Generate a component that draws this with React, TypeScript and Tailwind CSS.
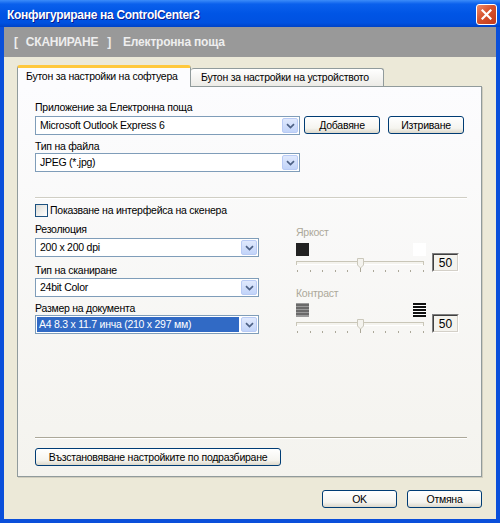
import React from "react";

const Chevron = () => (
  <svg width="9" height="6" viewBox="0 0 9 6">
    <path d="M1 1.2 L4.5 4.6 L8 1.2" stroke="#4D6185" strokeWidth="1.7" fill="none" />
  </svg>
);

type ComboProps = { value: string; width: string; selected?: boolean };

function Combo({ value, width, selected }: ComboProps) {
  return (
    <div className={`flex h-[19px] shrink-0 border border-[#7F9DB9] bg-white ${width}`}>
      <div className="flex min-w-0 flex-1 items-center p-[1px]">
        {selected ? (
          <span className="flex h-full flex-1 items-center whitespace-nowrap bg-[#316AC5] pl-[2px] text-white">{value}</span>
        ) : (
          <span className="whitespace-nowrap pl-[3px]">{value}</span>
        )}
      </div>
      <div className="m-[1px] flex w-[16px] items-center justify-center rounded-[2px] border border-[#B9CBF5] bg-[linear-gradient(#E0E9FD,#C2D4F9)]">
        <Chevron />
      </div>
    </div>
  );
}

function XpButton({ children, className = "" }: { children: React.ReactNode; className?: string }) {
  return (
    <button
      className={`flex h-[18px] shrink-0 items-center justify-center whitespace-nowrap rounded-[3px] border border-[#003C74] bg-[linear-gradient(#FFFFFF,#F5F4EF_70%,#DCD8CB)] text-[10.5px] leading-none tracking-[-0.25px] text-black ${className}`}
    >
      {children}
    </button>
  );
}

const Label = ({ children, disabled }: { children: React.ReactNode; disabled?: boolean }) => (
  <span className={`block h-[13px] whitespace-nowrap leading-[13px] ${disabled ? "text-[#ACA899]" : "text-black"}`}>{children}</span>
);

// disabled trackbar with 11 ticks
const Slider = ({ className = "" }: { className?: string }) => {
  const ticks = Array.from({ length: 11 }, (_, i) => Math.round(1 + i * 12.6) + 0.5);
  return (
    <svg width="130" height="16" viewBox="0 0 130 16" className={className}>
      <rect x="0.5" y="4.5" width="127" height="3" fill="#F4F3EE" stroke="#C9C6B8" />
      <line x1="1" y1="7.5" x2="127" y2="7.5" stroke="#FFFFFF" />
      {ticks.map((x, i) => (
        <line key={i} x1={x} y1={i === 5 ? 11 : 13} x2={x} y2="15" stroke="#ACA899" />
      ))}
      <path d="M61.5 1.5 H67.5 V8 L64.5 11 L61.5 8 Z" fill="#F4F3EE" stroke="#CBC8BB" />
    </svg>
  );
};

const ValueBox = () => (
  <div className="mb-[1px] flex h-[19px] w-[27px] items-center justify-center border border-t-[#808080] border-l-[#808080] border-r-[#FFFFFF] border-b-[#FFFFFF] bg-[#F4F3EE] text-[12px] tracking-normal">
    <div className="flex h-full w-full items-center justify-center border border-t-[#404040] border-l-[#404040] border-r-[#D4D0C8] border-b-[#D4D0C8]">50</div>
  </div>
);

const LightStripes = () => (
  <svg width="13" height="14" viewBox="0 0 13 14">
    <rect width="13" height="14" fill="#9A9A9A" />
    {[1, 4, 7, 10].map((y) => (
      <rect key={y} x="0" y={y} width="13" height="2" fill="#6A6A6A" />
    ))}
  </svg>
);

const DarkStripes = () => (
  <svg width="13" height="14" viewBox="0 0 13 14">
    <rect width="13" height="14" fill="#FFFFFF" />
    {[0, 3, 6, 9, 12].map((y) => (
      <rect key={y} x="0" y={y} width="13" height="2" fill="#111111" />
    ))}
  </svg>
);

export default function App() {
  return (
    <div className="flex h-[523px] w-[500px] flex-col overflow-hidden bg-[#0A4FDA] font-['Liberation_Sans',Arial,sans-serif] text-[10.5px] tracking-[-0.25px] text-black">
      {/* title bar */}
      <div className="flex h-[27px] shrink-0 items-center justify-between bg-[linear-gradient(#3C8CF9_0%,#0A60EC_15%,#0055E5_50%,#0051E0_85%,#0043C6_100%)] pl-[7px] pr-[3px] pt-[2px]">
        <span className="text-[12px] font-bold tracking-[-0.3px] text-white [text-shadow:1px_1px_0_#0A1A8C]">Конфигуриране на ControlCenter3</span>
        <div className="flex h-[21px] w-[21px] items-center justify-center rounded-[3px] border border-white bg-[linear-gradient(135deg,#EE8B6A,#D6522D_45%,#C23A1A)]">
          <svg width="11" height="11" viewBox="0 0 11 11">
            <path d="M1.5 1.5 L9.5 9.5 M9.5 1.5 L1.5 9.5" stroke="#FFFFFF" strokeWidth="2.2" strokeLinecap="square" />
          </svg>
        </div>
      </div>

      {/* client area */}
      <div className="mx-[4px] mb-[4px] flex flex-1 flex-col bg-[#ECE9D8]">
        <div className="flex h-[30px] shrink-0 items-center bg-[#999999] pl-[10px] text-[12px] font-bold tracking-[-0.2px] text-[#EEEEEE]">
          <span>[</span>
          <span className="ml-[8px]">СКАНИРАНЕ</span>
          <span className="ml-[9px]">]</span>
          <span className="ml-[12px]">Електронна поща</span>
        </div>

        <div className="flex flex-col pl-[13px] pt-[8px]">
          {/* tabs */}
          <div className="flex h-[21px] items-end">
            <div className="relative z-10 -mb-px flex h-[22px] w-[174px] items-center whitespace-nowrap rounded-t-[3px] border-x border-t-[3px] border-x-[#919B9C] border-t-[#FFC83C] bg-[#FCFCFE] pb-[2px] pl-[8px]">
              Бутон за настройки на софтуера
            </div>
            <div className="flex h-[18px] w-[193px] items-center whitespace-nowrap rounded-t-[3px] border-r border-t border-[#919B9C] bg-[linear-gradient(#FFFFFF,#ECEBE6)] pl-[10px]">
              Бутон за настройки на устройството
            </div>
          </div>

          {/* panel */}
          <div className="flex h-[391px] w-[465px] flex-col border border-[#919B9C] bg-[linear-gradient(#FCFCFE,#F4F3EE)] pb-[10px] pl-[17px] pr-[14px] pt-[14px] shadow-[1px_1px_0_#D0CDBE]">
            <Label>Приложение за Електронна поща</Label>
            <div className="mt-[2px] flex items-start">
              <Combo value="Microsoft Outlook Express 6" width="w-[265px]" />
              <XpButton className="ml-[4px] w-[76px]">Добавяне</XpButton>
              <XpButton className="ml-[8px] w-[76px]">Изтриване</XpButton>
            </div>
            <div className="mt-[5px]">
              <Label>Тип на файла</Label>
            </div>
            <Combo value="JPEG (*.jpg)" width="w-[265px]" />

            <div className="mt-[25px] h-[2px] border-t border-b border-t-[#D0CEC4] border-b-white" />

            <div className="mt-[5px] flex h-[13px] items-center gap-[2px]">
              <div className="h-[13px] w-[13px] border border-[#1C5180] bg-[linear-gradient(135deg,#DCDCD7,#FFFFFF)]" />
              <span className="whitespace-nowrap leading-[13px]">Показване на интерфейса на скенера</span>
            </div>

            <div className="mt-[6px] flex">
              <div className="flex w-[224px] flex-col">
                <Label>Резолюция</Label>
                <div className="mt-[2px]">
                  <Combo value="200 x 200 dpi" width="w-[224px]" />
                </div>
                <div className="mt-[7px]">
                  <Label>Тип на сканиране</Label>
                </div>
                <div className="mt-[1px]">
                  <Combo value="24bit Color" width="w-[224px]" />
                </div>
                <div className="mt-[5px]">
                  <Label>Размер на документа</Label>
                </div>
                <Combo value="A4 8.3 x 11.7 инча (210 x 297 мм)" width="w-[224px]" selected />
              </div>

              <div className="ml-[37px] flex flex-col pt-[3px]">
                <Label disabled>Яркост</Label>
                <div className="mt-[4px] flex items-end gap-[6px]">
                  <div className="flex w-[130px] flex-col">
                    <div className="flex justify-between">
                      <div className="h-[13px] w-[13px] bg-[#222222]" />
                      <div className="h-[13px] w-[13px] bg-white" />
                    </div>
                    <Slider className="mt-[1px]" />
                  </div>
                  <ValueBox />
                </div>
                <div className="mt-[14px]">
                  <Label disabled>Контраст</Label>
                </div>
                <div className="mt-[3px] flex items-end gap-[6px]">
                  <div className="flex w-[130px] flex-col">
                    <div className="flex justify-between">
                      <LightStripes />
                      <DarkStripes />
                    </div>
                    <Slider className="mt-[1px]" />
                  </div>
                  <ValueBox />
                </div>
              </div>
            </div>

            <div className="mt-auto h-[2px] border-t border-b border-t-[#ACA899] border-b-white" />
            <XpButton className="mt-[9px] w-[246px]">Възстановяване настройките по подразбиране</XpButton>
          </div>
        </div>

        <div className="mt-[13px] flex justify-end gap-[10px] pr-[14px]">
          <XpButton className="w-[75px]">OK</XpButton>
          <XpButton className="w-[75px]">Отмяна</XpButton>
        </div>
      </div>
    </div>
  );
}
